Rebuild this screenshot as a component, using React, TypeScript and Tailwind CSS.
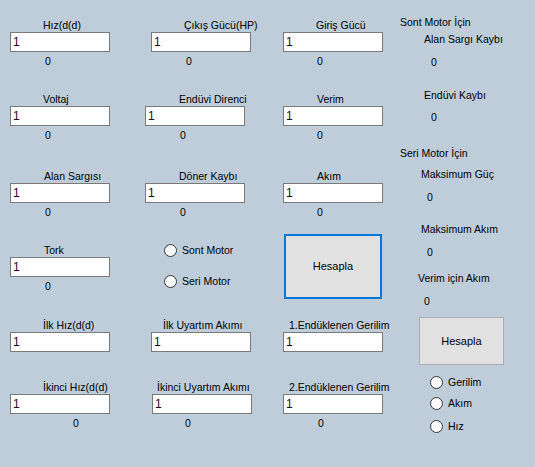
import type { ReactNode } from "react";

function Field({
  label,
  className,
  labelX,
  boxX = "",
  zeroX,
}: {
  label: string;
  className: string;
  labelX: string;
  boxX?: string;
  zeroX?: string;
}) {
  return (
    <div className={className}>
      <div className={`h-[14px] leading-[14px] whitespace-nowrap ${labelX}`}>{label}</div>
      <div
        className={`h-[20px] w-[100px] border border-[#7a7a7a] bg-white pl-[2px] text-[12px] leading-[18px] text-[#1a0a1a] ${boxX}`}
      >
        1
      </div>
      {zeroX && <div className={`mt-[2px] h-[14px] leading-[14px] ${zeroX}`}>0</div>}
    </div>
  );
}

function Radio({ children, className }: { children: ReactNode; className: string }) {
  return (
    <div className={`flex h-[16px] items-center ${className}`}>
      <span className="h-[13px] w-[13px] rounded-full border border-[#333] bg-white" />
      <span className="ml-[5px] whitespace-nowrap leading-[14px]">{children}</span>
    </div>
  );
}

function Text({ children, className }: { children: ReactNode; className: string }) {
  return <div className={`h-[14px] leading-[14px] whitespace-nowrap ${className}`}>{children}</div>;
}

export default function App() {
  return (
    <div className="flex h-[467px] w-[535px] overflow-hidden bg-[#bfcddb] font-['Liberation_Sans',Arial,sans-serif] text-[10.5px] text-black">
      {/* sütun 1 */}
      <div className="flex w-[145px] shrink-0 flex-col pl-[10px]">
        <Field className="mt-[18px]" label="Hız(d(d)" labelX="ml-[33px]" zeroX="ml-[35px]" />
        <Field className="mt-[24px]" label="Voltaj" labelX="ml-[33px]" zeroX="ml-[35px]" />
        <Field className="mt-[27px]" label="Alan Sargısı" labelX="ml-[34px]" zeroX="ml-[35px]" />
        <Field className="mt-[24px]" label="Tork" labelX="ml-[34px]" zeroX="ml-[35px]" />
        <Field className="mt-[25px]" label="İlk Hız(d(d)" labelX="ml-[33px]" />
        <Field className="mt-[28px]" label="İkinci Hız(d(d)" labelX="ml-[33px]" zeroX="ml-[63px]" />
      </div>

      {/* sütun 2 */}
      <div className="flex w-[138px] shrink-0 flex-col">
        <Field className="mt-[18px]" label="Çıkış Gücü(HP)" labelX="ml-[39px]" boxX="ml-[6px]" zeroX="ml-[41px]" />
        <Field className="mt-[24px]" label="Endüvi Direnci" labelX="ml-[34px]" zeroX="ml-[35px]" />
        <Field className="mt-[27px]" label="Döner Kaybı" labelX="ml-[34px]" zeroX="ml-[35px]" />
        <Radio className="ml-[19px] mt-[23px]">Sont Motor</Radio>
        <Radio className="ml-[19px] mt-[15px]">Seri Motor</Radio>
        <Field className="mt-[29px]" label="İlk Uyartım Akımı" labelX="ml-[18px]" boxX="ml-[6px]" />
        <Field className="mt-[28px]" label="İkinci Uyartım Akımı" labelX="ml-[12px]" boxX="ml-[7px]" zeroX="ml-[40px]" />
      </div>

      {/* sütun 3 */}
      <div className="flex w-[117px] shrink-0 flex-col">
        <Field className="mt-[18px]" label="Giriş Gücü" labelX="ml-[33px]" zeroX="ml-[34px]" />
        <Field className="mt-[24px]" label="Verim" labelX="ml-[34px]" zeroX="ml-[34px]" />
        <Field className="mt-[27px]" label="Akım" labelX="ml-[34px]" zeroX="ml-[34px]" />
        <button className="ml-[1px] mt-[15px] h-[65px] w-[98px] border-2 border-[#0078d7] bg-[#e1e1e1] text-[11px]">
          Hesapla
        </button>
        <Field className="mt-[19px]" label="1.Endüklenen Gerilim" labelX="ml-[6px]" />
        <Field className="mt-[28px]" label="2.Endüklenen Gerilim" labelX="ml-[6px]" zeroX="ml-[35px]" />
      </div>

      {/* sonuçlar */}
      <div className="flex flex-1 flex-col">
        <Text className="mt-[15px]">Sont Motor İçin</Text>
        <Text className="ml-[24px] mt-[3px]">Alan Sargı Kaybı</Text>
        <Text className="ml-[31px] mt-[9px]">0</Text>
        <Text className="ml-[24px] mt-[19px]">Endüvi Kaybı</Text>
        <Text className="ml-[31px] mt-[8px]">0</Text>
        <Text className="mt-[22px]">Seri Motor İçin</Text>
        <Text className="ml-[21px] mt-[7px]">Maksimum Güç</Text>
        <Text className="ml-[27px] mt-[9px]">0</Text>
        <Text className="ml-[21px] mt-[18px]">Maksimum Akım</Text>
        <Text className="ml-[27px] mt-[9px]">0</Text>
        <Text className="ml-[18px] mt-[12px]">Verim için Akım</Text>
        <Text className="ml-[24px] mt-[9px]">0</Text>
        <button className="ml-[19px] mt-[9px] h-[48px] w-[85px] border border-[#adadad] bg-[#e1e1e1] text-[11px]">
          Hesapla
        </button>
        <Radio className="ml-[30px] mt-[9px]">Gerilim</Radio>
        <Radio className="ml-[30px] mt-[5px]">Akım</Radio>
        <Radio className="ml-[30px] mt-[7px]">Hız</Radio>
      </div>
    </div>
  );
}
